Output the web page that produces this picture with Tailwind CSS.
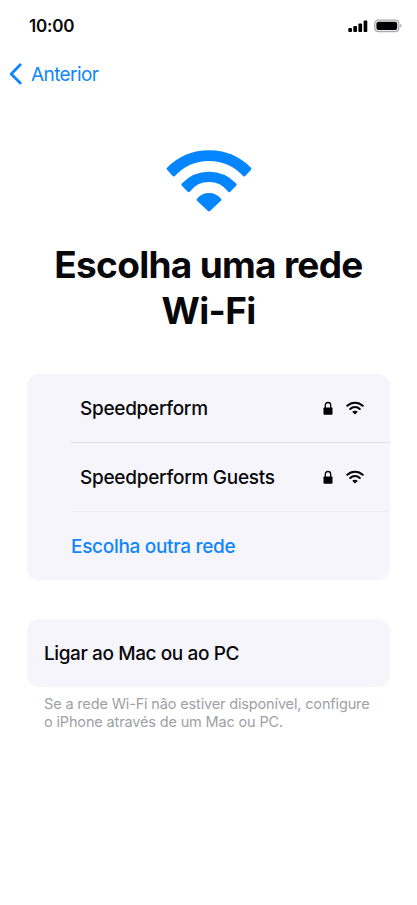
<!DOCTYPE html>
<html lang="pt">
<head>
<meta charset="utf-8">
<title>Escolha uma rede Wi-Fi</title>
<script src="https://cdn.jsdelivr.net/npm/@tailwindcss/browser@4"></script>
</head>
<body class="bg-white">
<svg class="hidden">
  <symbol id="wifi" viewBox="-43 -62 86 63">
    <g fill="currentColor" stroke="currentColor" stroke-width="3" stroke-linejoin="round">
      <path d="M-40.9-42.2A57.7 57.7 0 0 1 40.9-42.2L35.2-36A47.5 47.5 0 0 0-35.2-36Z"/>
      <path d="M-26.1-26.4A35.6 35.6 0 0 1 26.1-26.4L20.2-20.4A25.4 25.4 0 0 0-20.2-20.4Z"/>
      <path d="M-10.9-11.3A14.2 14.2 0 0 1 10.9-11.3L0-1.2Z"/>
    </g>
  </symbol>
  <symbol id="wifi-small" viewBox="0 0 18 14">
    <g fill="none" stroke="currentColor" stroke-width="2" stroke-linecap="round">
      <path d="M1.3 4.8A11 11 0 0 1 16.7 4.8"/>
      <path d="M4.2 8A6.9 6.9 0 0 1 13.8 8"/>
    </g>
    <path fill="currentColor" d="M6.2 10.7Q9 8.6 11.8 10.7L9 13.5Z"/>
  </symbol>
  <symbol id="lock" viewBox="0 0 10 14">
    <rect x="0.5" y="6.5" width="9" height="7.3" rx="0.8" fill="currentColor"/>
    <path d="M2.3 7V4.3Q2.3 1.5 5 1.5T7.7 4.3V7" fill="none" stroke="currentColor" stroke-width="1.3"/>
  </symbol>
</svg>
<div class="flex h-[905px] w-[417px] flex-col overflow-hidden bg-white font-['Inter',sans-serif] whitespace-nowrap text-[#08080a]">
  <header class="flex h-[52px] items-center justify-between pl-[29px] pr-[15px]">
    <span class="text-[17px] font-semibold leading-5 tracking-[-0.2px]">10:00</span>
    <svg class="h-[14px] w-[54px]" viewBox="0 0 54 14" fill="#000">
      <rect x="0.3" y="9" width="3.7" height="4" rx="1"/>
      <rect x="5.3" y="7" width="3.7" height="6" rx="1"/>
      <rect x="10.4" y="4.4" width="3.7" height="8.6" rx="1"/>
      <rect x="15.6" y="1.4" width="3.7" height="11.6" rx="1"/>
      <rect x="26.8" y="1.1" width="24" height="11.4" rx="3.4" fill="#fff" stroke="#aaa9ae" stroke-width="1.3"/>
      <rect x="28.4" y="2.7" width="20.8" height="8.2" rx="2"/>
      <path d="M52.2 4.8Q53.6 5.2 53.6 6.8T52.2 8.8Z" fill="#aaa9ae"/>
    </svg>
  </header>
  <nav class="flex h-11 items-center gap-[9px] pl-[9px] text-[#1086fc]">
    <svg class="h-[22px] w-[13px]" viewBox="0 0 13 22" fill="none" stroke="currentColor" stroke-width="2.8" stroke-linecap="round" stroke-linejoin="round"><path d="M11.2 1.8L2.2 11L11.2 20"/></svg>
    <span class="pt-0.5 text-[19px] leading-6 tracking-[-0.6px]">Anterior</span>
  </nav>
  <main class="flex flex-col px-[27px] pt-[53px]">
    <svg class="ml-[138.5px] h-[63px] w-[86px] text-[#0586ff]"><use href="#wifi"/></svg>
    <h1 class="mt-[30px] flex flex-col items-center text-[37px] font-bold leading-[46px] tracking-[-0.7px]"><span>Escolha uma rede</span><span>Wi-Fi</span></h1>
    <ul class="mt-[40px] flex h-[206px] flex-col rounded-[12px] bg-[#f6f5fc] pl-[44px] text-[19px] font-medium">
      <li class="flex h-[69px] items-center border-b border-[#dfdee4] pl-[9px] pr-[26px]">
        <span class="grow pt-0.5 tracking-[-0.3px]">Speedperform</span>
        <svg class="mr-[13px] h-[14px] w-[10px] text-black"><use href="#lock"/></svg>
        <svg class="h-[14px] w-[18px] text-black"><use href="#wifi-small"/></svg>
      </li>
      <li class="flex h-[69px] items-center border-b border-[#eeedf3] pl-[9px] pr-[26px]">
        <span class="grow pt-0.5 tracking-[-0.27px]">Speedperform Guests</span>
        <svg class="mr-[13px] h-[14px] w-[10px] text-black"><use href="#lock"/></svg>
        <svg class="h-[14px] w-[18px] text-black"><use href="#wifi-small"/></svg>
      </li>
      <li class="flex h-[68px] items-center text-[#1086fc]"><span class="pt-0.5 tracking-[-0.3px]">Escolha outra rede</span></li>
    </ul>
    <div class="mt-[39px] flex h-[68px] items-center rounded-[12px] bg-[#f6f5fc] pl-[17px] text-[19px] font-medium"><span class="pt-0.5 tracking-[-0.4px]">Ligar ao Mac ou ao PC</span></div>
    <p class="mt-[8px] flex flex-col pl-[17px] text-[14.5px] leading-[18px] tracking-[-0.15px] text-[#a09fa5]"><span>Se a rede Wi-Fi não estiver disponível, configure</span><span>o iPhone através de um Mac ou PC.</span></p>
  </main>
</div>
</body>
</html>
